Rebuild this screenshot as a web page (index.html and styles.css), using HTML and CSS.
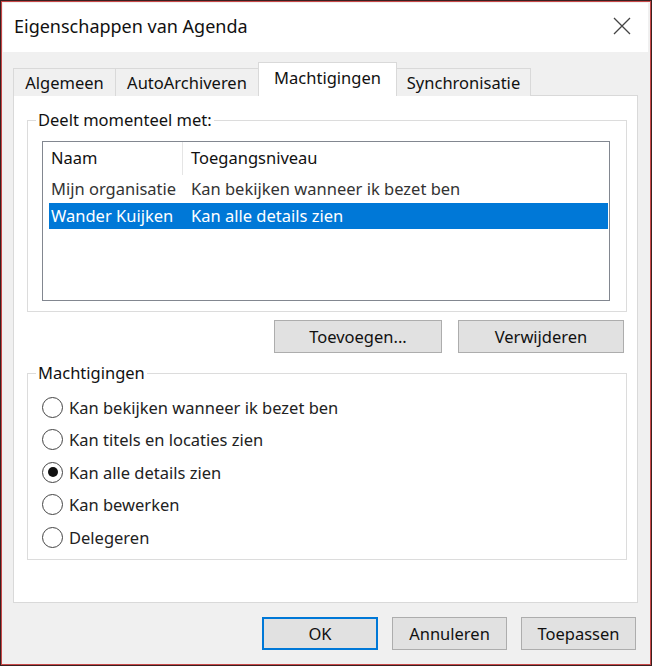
FILE: index.html
```html
<!DOCTYPE html>
<html lang="nl">
<head>
    <meta charset="UTF-8">
    <meta name="viewport" content="width=device-width, initial-scale=1.0">
    <title>Eigenschappen van Agenda</title>
    <link rel="stylesheet" href="styles.css">
</head>
<body>
    <div class="window">
        <div class="titlebar">
            <span class="title">Eigenschappen van Agenda</span>
            <svg class="close" width="18" height="18" viewBox="0 0 18 18">
                <path d="M1 1 L17 17 M17 1 L1 17" stroke="#444" stroke-width="1.3" fill="none"/>
            </svg>
        </div>
        <div class="content">
            <div class="tabs">
                <div class="tab tab-general">Algemeen</div>
                <div class="tab tab-archive">AutoArchiveren</div>
                <div class="tab tab-perms active">Machtigingen</div>
                <div class="tab tab-sync">Synchronisatie</div>
            </div>
            <div class="panel">
                <fieldset class="group">
                    <legend>Deelt momenteel met:</legend>
                    <div class="listbox">
                        <div class="list-row list-head">
                            <div class="cell first">Naam</div>
                            <div class="cell">Toegangsniveau</div>
                        </div>
                        <div class="list-row">
                            <div class="cell">Mijn organisatie</div>
                            <div class="cell">Kan bekijken wanneer ik bezet ben</div>
                        </div>
                        <div class="list-row selected">
                            <div class="cell">Wander Kuijken</div>
                            <div class="cell">Kan alle details zien</div>
                        </div>
                    </div>
                </fieldset>
                <div class="button-row">
                    <button class="btn btn-add">Toevoegen...</button>
                    <button class="btn btn-remove">Verwijderen</button>
                </div>
                <fieldset class="group group-perm">
                    <legend>Machtigingen</legend>
                    <label class="radio"><span class="dot"></span>Kan bekijken wanneer ik bezet ben</label>
                    <label class="radio"><span class="dot"></span>Kan titels en locaties zien</label>
                    <label class="radio"><span class="dot checked"></span>Kan alle details zien</label>
                    <label class="radio"><span class="dot"></span>Kan bewerken</label>
                    <label class="radio"><span class="dot"></span>Delegeren</label>
                </fieldset>
            </div>
            <div class="footer">
                <button class="btn btn-footer btn-default">OK</button>
                <button class="btn btn-footer">Annuleren</button>
                <button class="btn btn-footer">Toepassen</button>
            </div>
        </div>
    </div>
</body>
</html>
```

FILE: styles.css
```css
body {
    margin: 0;
    font-family: "Noto Sans", "Open Sans", sans-serif;
    font-size: 16.5px;
    color: #222;
}
.window {
    width: 652px;
    height: 666px;
    box-sizing: border-box;
    border: 1px solid #3a2020;
    box-shadow: inset 0 0 0 1px #c84848;
    padding: 2px 3px 2px 2px;
    background: #f0f0f0;
    display: flex;
    flex-direction: column;
}
.titlebar {
    height: 49px;
    background: #fff;
    display: flex;
    align-items: center;
    justify-content: space-between;
    padding: 0 17px 0 11px;
    flex-shrink: 0;
}
.title {
    font-size: 18px;
    color: #111;
    margin-top: -3px;
}
.close {
    margin-top: -4px;
}
.content {
    padding: 0 10px 0 10px;
}
.tabs {
    display: flex;
    align-items: flex-end;
    height: 44px;
    margin-bottom: -1px;
    position: relative;
}
.tab {
    height: 28px;
    line-height: 28px;
    border: 1px solid #d9d9d9;
    border-bottom: none;
    border-right: none;
    background: #f0f0f0;
    color: #111;
    box-sizing: border-box;
    white-space: nowrap;
    text-align: center;
}
.tab-general {
    width: 102px;
}
.tab-archive {
    width: 143px;
}
.tab-perms {
    width: 139px;
}
.tab-sync {
    width: 134px;
    border-right: 1px solid #d9d9d9;
}
.tab.active {
    height: 34px;
    line-height: 30px;
    background: #fff;
    border-right: 1px solid #d9d9d9;
    position: relative;
    z-index: 1;
}
.tab.active + .tab {
    border-left: none;
}
.panel {
    background: #fff;
    border: 1px solid #d9d9d9;
    height: 508px;
    box-sizing: border-box;
    padding: 13px 10px 0 13px;
}
.group {
    margin: 0;
    border: 1px solid #dcdcdc;
    padding: 0 16px 10px 14px;
}
.group legend {
    padding: 0 2px;
    margin-left: -6px;
    line-height: 22px;
    color: #111;
}
.listbox {
    margin-top: 10px;
    height: 160px;
    box-sizing: border-box;
    border: 1px solid #828790;
    padding: 0 1px 0 6px;
}
.list-row {
    display: grid;
    grid-template-columns: 137px 1fr;
    height: 26px;
    line-height: 26px;
    color: #333;
}
.list-head {
    height: 33px;
    line-height: 31px;
    color: #111;
    margin-bottom: 1px;
}
.list-head .first {
    border-right: 1px solid #e5e5e5;
    margin-right: 3px;
}
.cell {
    padding-left: 2px;
    white-space: nowrap;
}
.list-row .cell + .cell {
    padding-left: 5px;
}
.selected {
    background: #0078d7;
    color: #fff;
    margin-top: 1px;
}
.button-row {
    display: flex;
    justify-content: flex-end;
    gap: 16px;
    margin: 8px 3px 0 0;
}
.btn {
    font-family: inherit;
    font-size: 16.5px;
    color: #111;
    background: #e1e1e1;
    border: 1px solid #adadad;
    height: 33px;
    padding: 0;
}
.btn-add {
    width: 168px;
}
.btn-remove {
    width: 166px;
}
.group-perm {
    margin-top: 9px;
    padding-bottom: 5px;
}
.radio {
    display: flex;
    align-items: center;
    height: 32.5px;
    color: #222;
}
.radio:first-of-type {
    margin-top: 7px;
}
.dot {
    width: 21px;
    height: 21px;
    box-sizing: border-box;
    border: 1px solid #444;
    border-radius: 50%;
    margin: 0 6px 0 0;
    display: flex;
    align-items: center;
    justify-content: center;
    flex-shrink: 0;
}
.dot.checked::after {
    content: "";
    width: 10px;
    height: 10px;
    border-radius: 50%;
    background: #111;
}
.footer {
    display: flex;
    justify-content: flex-end;
    margin-top: 14px;
    padding-right: 2px;
}
.btn-footer {
    width: 115px;
    margin-left: 14px;
}
.btn-default {
    width: 116px;
    border: 2px solid #0078d7;
}
```
